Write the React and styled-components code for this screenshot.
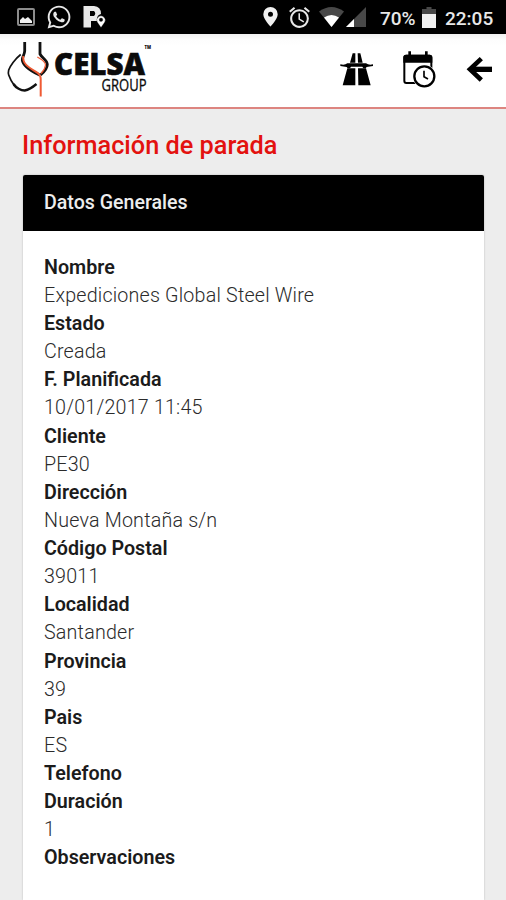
import React from 'react';
import styled, { createGlobalStyle } from 'styled-components';
import { FaWhatsapp } from 'react-icons/fa';
import { MdAlarm } from 'react-icons/md';

const GlobalStyle = createGlobalStyle`
  body {
    margin: 0;
    background: #ededed;
    font-family: Roboto, sans-serif;
  }
`;

const Screen = styled.div`
  display: flex;
  flex-direction: column;
  height: 900px;
  overflow: hidden;
`;

const StatusBar = styled.div`
  display: flex;
  flex: none;
  align-items: center;
  justify-content: space-between;
  box-sizing: border-box;
  height: 34px;
  padding: 0 11px 0 17px;
  background: #000;
  color: #e8e8e8;
`;

const StatusGroup = styled.div`
  display: flex;
  align-items: center;
  gap: ${props => props.gap}px;

  svg {
    display: block;
    flex: none;
  }
`;

const StatusText = styled.span`
  width: ${props => props.width}px;
  margin: 3px ${props => props.after || 0}px 0 ${props => props.before || 0}px;
  font-size: 19px;
  font-weight: 500;
  line-height: 22px;
  white-space: nowrap;
`;

const SignalGroup = styled(StatusGroup)`
  margin-left: 7px;
`;

const Header = styled.header`
  display: flex;
  flex: none;
  align-items: center;
  justify-content: space-between;
  box-sizing: border-box;
  height: 75px;
  padding: 0 13px 4px 0;
  background: linear-gradient(#f1f1f1, #fdfdfd 6px, #fff 12px);
  border-bottom: 2px solid #dd8580;
`;

const Actions = styled.nav`
  display: flex;
  align-items: center;
  gap: 29px;
`;

const IconButton = styled.button`
  display: flex;
  padding: 0;
  border: 0;
  background: none;
`;

const Content = styled.main`
  display: flex;
  flex: 1;
  flex-direction: column;
  padding: 21px 22px 0 23px;
`;

const Title = styled.h1`
  margin: 0 0 13px -1px;
  color: #e3120f;
  font-size: 25.3px;
  font-weight: 500;
  line-height: 32px;
`;

const Card = styled.section`
  flex: 1;
  background: #fff;
  border-radius: 2px 2px 0 0;
  box-shadow: 0 0 2px rgba(0, 0, 0, 0.25);
`;

const CardHeader = styled.h2`
  height: 56px;
  margin: 0;
  padding-left: 21px;
  border-radius: 2px 2px 0 0;
  background: #000;
  color: #ededed;
  font-size: 19.6px;
  font-weight: 500;
  line-height: 55.5px;
`;

const Details = styled.dl`
  margin: 0;
  padding: 22.8px 21px;
  font-size: 19.7px;
  line-height: 28.12px;
`;

const Label = styled.dt`
  color: #1b1b1b;
  font-weight: 600;
`;

const Value = styled.dd`
  margin: 0;
  color: #2b2b2b;
  font-weight: 300;
  letter-spacing: 0.19px;
`;

const fields = [
  ['Nombre', 'Expediciones Global Steel Wire'],
  ['Estado', 'Creada'],
  ['F. Planificada', '10/01/2017 11:45'],
  ['Cliente', 'PE30'],
  ['Dirección', 'Nueva Montaña s/n'],
  ['Código Postal', '39011'],
  ['Localidad', 'Santander'],
  ['Provincia', '39'],
  ['Pais', 'ES'],
  ['Telefono', ''],
  ['Duración', '1'],
  ['Observaciones', '']
];

const PictureIcon = () => (
  <svg width="18" height="18" viewBox="0 0 18 18">
    <rect x="1" y="1" width="16" height="16" rx="1" fill="none" stroke="#8c8c8c" strokeWidth="2" />
    <path d="M3 15V12L6 9L8 11L11 9L15 13V15Z" fill="#f2f2f2" />
  </svg>
);

const ParkingIcon = () => (
  <svg width="23" height="23" viewBox="0 0 23 23">
    <path fillRule="evenodd" d="M.5 0H11Q18 .5 18 8Q14 9 14 13V15H8V21.500H.5ZM7 5V10H11Q13.500 7.500 11 5Z" fill="#e8e8e8" />
    <path fillRule="evenodd" d="M18 21.500L14.500 16.500A4.200 4.200 0 1 1 21.500 16.500ZM18 12A1.800 1.800 0 1 0 18 15.600A1.800 1.800 0 1 0 18 12Z" fill="#fff" stroke="#000" strokeWidth=".3" />
  </svg>
);

const PinIcon = () => (
  <svg width="15" height="20" viewBox="0 0 15 20">
    <path fillRule="evenodd" d="M7.500 0A7.200 7.200 0 0 0 .3 7.200C.3 12 7.500 19.500 7.500 19.500S14.700 12 14.700 7.200A7.200 7.200 0 0 0 7.500 0ZM7.500 4.700A2.500 2.500 0 1 1 7.500 9.700A2.500 2.500 0 1 1 7.500 4.700Z" fill="#f0f0f0" />
  </svg>
);

const WifiIcon = () => (
  <svg width="25" height="20" viewBox="0 0 25 20">
    <path d="M0 4.500Q12.500 -4.500 25 4.500L12.500 20Z" fill="#484848" />
    <path d="M5 10.500Q12.500 5.500 20 10.500L12.500 20Z" fill="#fff" />
  </svg>
);

const SignalIcon = () => (
  <svg width="20" height="20" viewBox="0 0 20 20">
    <path d="M20 0V20H0Z" fill="#484848" />
    <path d="M8 12V20H0Z" fill="#fff" />
  </svg>
);

const BatteryIcon = () => (
  <svg width="14" height="21" viewBox="0 0 14 21">
    <path d="M4.500 0H9.500V2H14V7H0V2H4.500Z" fill="#484848" />
    <path d="M0 7H14V21H0Z" fill="#f0f0f0" />
  </svg>
);

const Logo = () => (
  <svg width="160" height="70" viewBox="0 0 160 70">
    <g fill="none" strokeLinecap="butt">
      <path d="M20.700 20.500C15 25 10 32 8.700 36Q8 39 8.700 41C10 45 12.500 49 14.700 52" stroke="#111" strokeWidth="1.700" />
      <path d="M13.500 50C16 54 21 56.500 24.700 56.500Q30 55.500 36.500 50" stroke="#111" strokeWidth="2.400" />
      <path d="M24.700 8V17C24.500 21 22 23 22.300 26C23 32 30 36.500 39.500 41" stroke="#111" strokeWidth="2.800" />
      <path d="M40 8V20C42 24 47.300 26 47.300 30.500C47.300 35 43.500 38.500 40.500 41" stroke="#111" strokeWidth="2.800" />
      <path d="M23.300 22C22 30 29.500 34 36 37.800Q40.700 40.500 40.700 45V62.500" stroke="#ef5a34" strokeWidth="2" />
      <path d="M37.300 23C41 25 45.500 27.500 45.500 31Q45 35.500 41 39.500" stroke="#ef5a34" strokeWidth="1.200" />
    </g>
    <g fill="#0b0b0b" stroke="#0b0b0b" fontFamily="Open Sans, sans-serif">
      <text x="54" y="41" fontSize="29.500" fontWeight="800" textLength="91" lengthAdjust="spacingAndGlyphs" strokeWidth=".6">CELSA</text>
      <text x="101.500" y="56.500" fontSize="15.500" textLength="45" lengthAdjust="spacingAndGlyphs" strokeWidth=".3">GROUP</text>
      <text x="144.500" y="15" fontSize="4.500" fontWeight="800" textLength="6.500" lengthAdjust="spacingAndGlyphs" strokeWidth="0">TM</text>
    </g>
  </svg>
);

const HighwayIcon = () => (
  <svg width="34" height="38" viewBox="30 40 102 114">
    <path d="M68 50H76V78H60ZM83 50H91L98 78H84ZM52 95H76V146H38ZM84 95H108L122 146H85Z" />
    <path d="M31 83Q45 86 52 80H108Q116 86 129 83V88L110 91L107 95H100L97 90H63L60 95H53L50 91L31 88Z" />
  </svg>
);

const CalendarClockIcon = () => (
  <svg width="34" height="38" viewBox="218 40 102 114">
    <rect x="222" y="57" width="81" height="82" rx="6" fill="#fff" stroke="#000" strokeWidth="6" />
    <path d="M219 78V62Q219 54 227 54H298Q306 54 306 62V78ZM234 44H242V56H234ZM284 44H292V56H284Z" />
    <circle cx="282" cy="119" r="35" fill="#fff" />
    <circle cx="282" cy="119" r="30" fill="#fff" stroke="#000" strokeWidth="7" />
    <path d="M281 102V120L293 127" fill="none" stroke="#000" strokeWidth="5" />
  </svg>
);

const BackIcon = () => (
  <svg width="27" height="38" viewBox="408 40 81 114">
    <path d="M422 98H486" stroke="#000" strokeWidth="16" />
    <path d="M454 66L420 98L454 130" fill="none" stroke="#000" strokeWidth="14" />
  </svg>
);

export default function App() {
  return (
    <Screen>
      <GlobalStyle />
      <StatusBar>
        <StatusGroup gap={11}>
          <PictureIcon />
          <FaWhatsapp size={26} />
          <ParkingIcon />
        </StatusGroup>
        <StatusGroup gap={0}>
          <StatusGroup gap={9}>
            <PinIcon />
            <MdAlarm size={25} />
          </StatusGroup>
          <SignalGroup gap={2}>
            <WifiIcon />
            <SignalIcon />
          </SignalGroup>
          <StatusText width={36} before={14} after={6}>70%</StatusText>
          <BatteryIcon />
          <StatusText width={50} before={9}>22:05</StatusText>
        </StatusGroup>
      </StatusBar>
      <Header>
        <Logo />
        <Actions>
          <IconButton aria-label="Ruta"><HighwayIcon /></IconButton>
          <IconButton aria-label="Planificación"><CalendarClockIcon /></IconButton>
          <IconButton aria-label="Volver"><BackIcon /></IconButton>
        </Actions>
      </Header>
      <Content>
        <Title>Información de parada</Title>
        <Card>
          <CardHeader>Datos Generales</CardHeader>
          <Details>
            {fields.map(([label, value]) => (
              <React.Fragment key={label}>
                <Label>{label}</Label>
                {value && <Value>{value}</Value>}
              </React.Fragment>
            ))}
          </Details>
        </Card>
      </Content>
    </Screen>
  );
}
